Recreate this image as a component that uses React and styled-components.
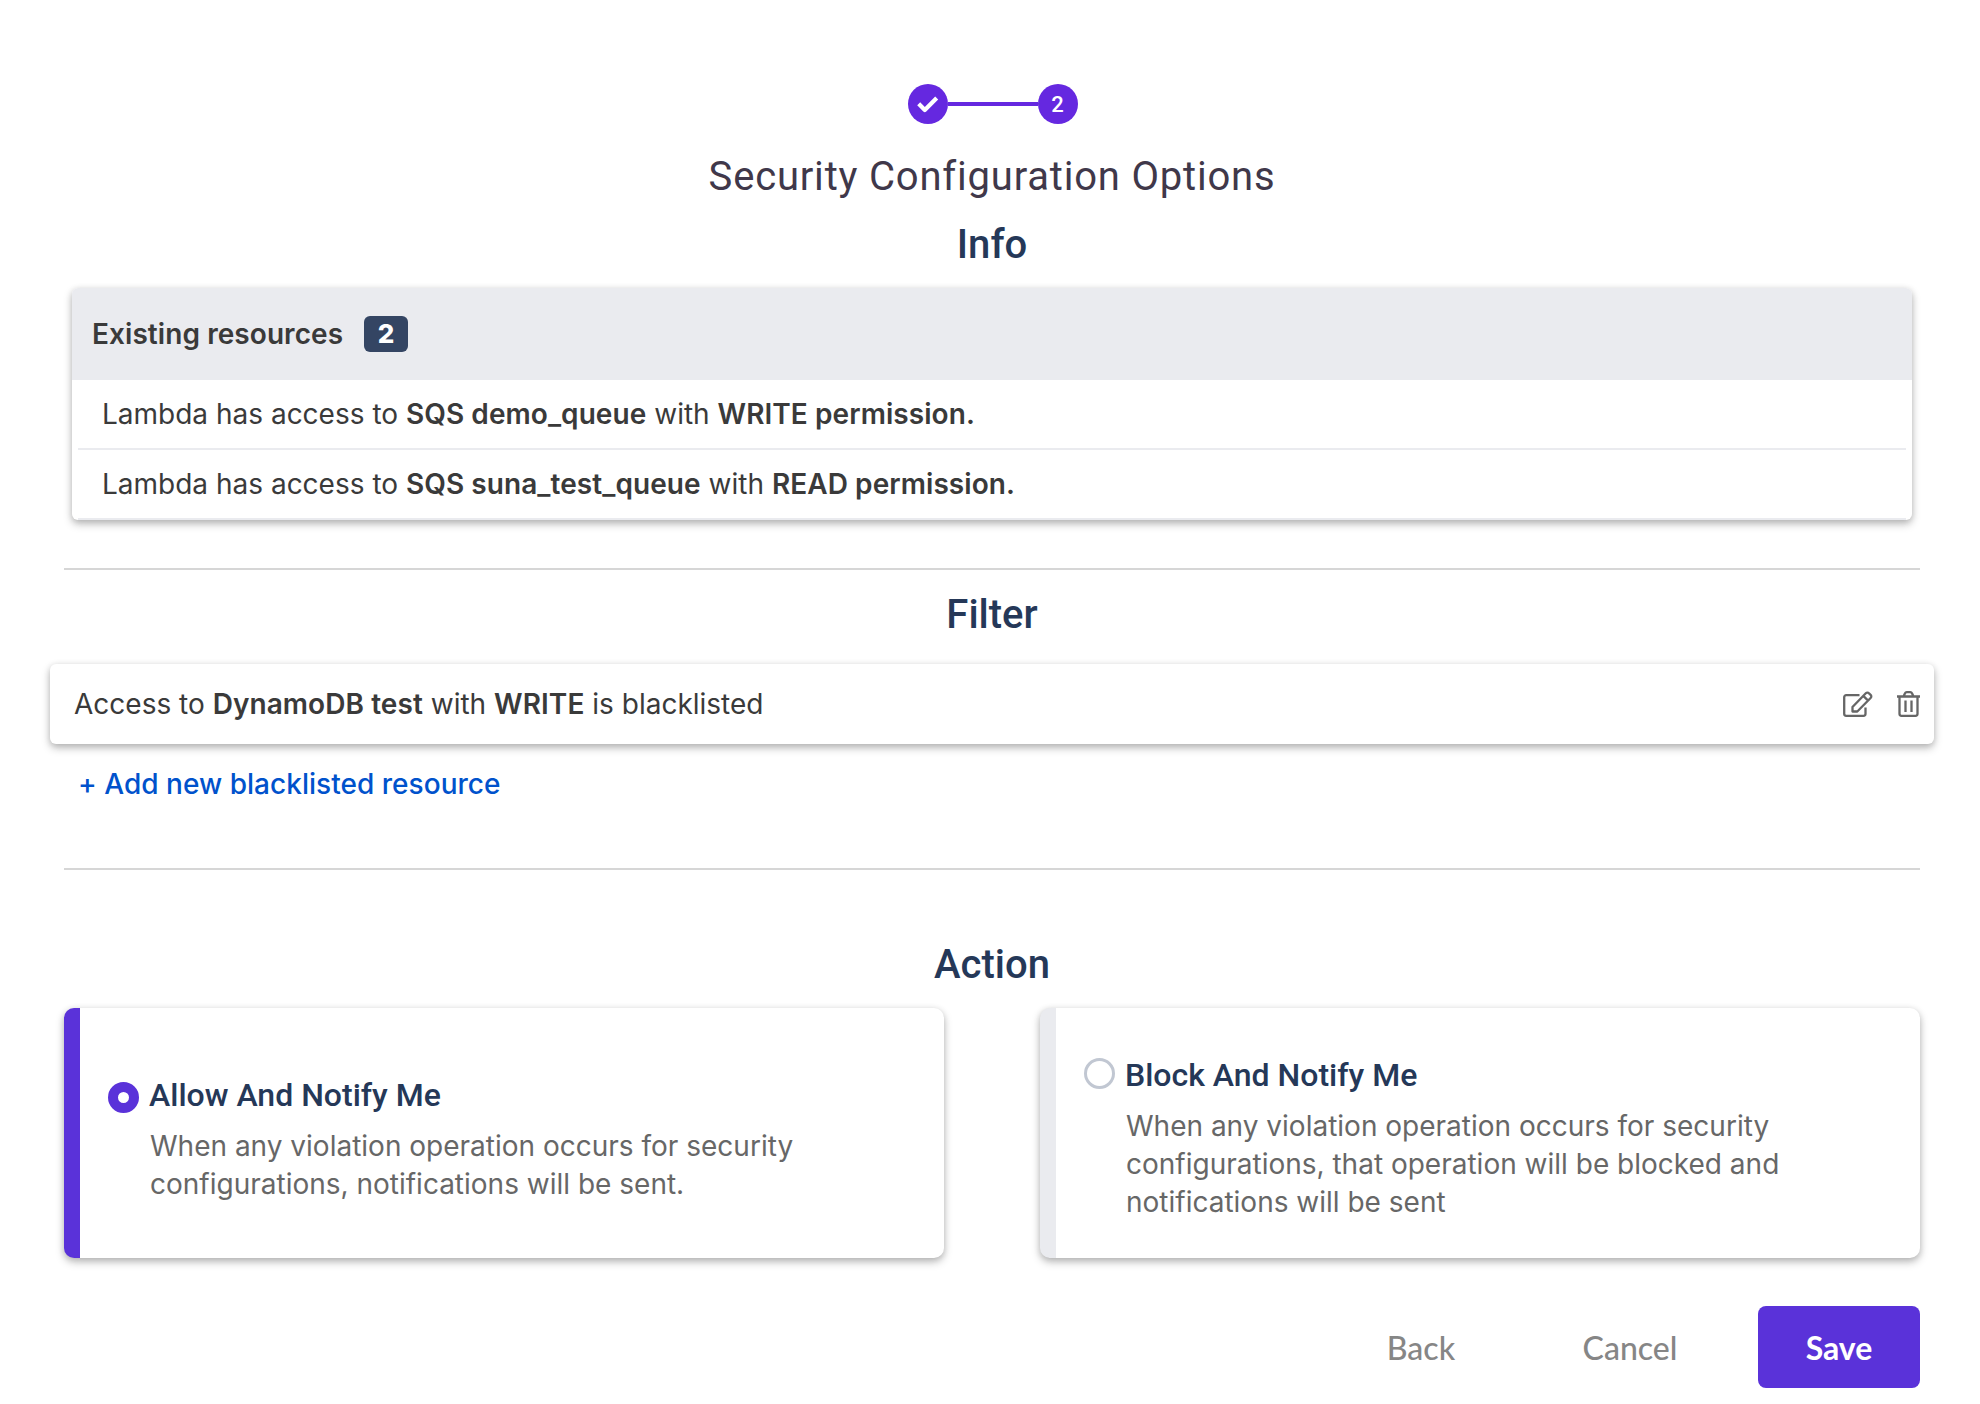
import React from 'react';
import styled, { createGlobalStyle } from 'styled-components';

const GlobalStyle = createGlobalStyle`
  *, *::before, *::after { box-sizing: border-box; }
  body { margin: 0; background: #fff; font-family: Inter, "Liberation Sans", sans-serif; }
`;

const shadow = '0 4px 8px rgba(0, 0, 0, 0.26), 0 1px 6px rgba(0, 0, 0, 0.1)';

const Page = styled.main`
  width: 1980px;
  height: 1404px;
  padding: 84px 60px 0 64px;
  display: flex;
  flex-direction: column;
  overflow: hidden;
  color: #3a3a3a;
  font-size: 28px;
`;

const Stepper = styled.div`
  display: flex;
  align-items: center;
  justify-content: center;
  padding-left: 2px;
`;

const Step = styled.div`
  width: 40px;
  height: 40px;
  padding: 1px 1px 0 0;
  border-radius: 50%;
  background: #6528e0;
  color: #fff;
  display: flex;
  align-items: center;
  justify-content: center;
  font: 500 22px/40px Roboto, sans-serif;
`;

const StepLine = styled.div`
  width: 90px;
  height: 4px;
  background: #6528e0;
`;

const Title = styled.h1`
  margin: 29px 0 0;
  text-align: center;
  font: 400 40px/48px Roboto, sans-serif;
  letter-spacing: 0.8px;
  color: #40384a;
`;

const Heading = styled.h2`
  margin: ${(p) => p.$top}px 0 0;
  text-align: center;
  font: 500 40px/48px Roboto, sans-serif;
  color: #253858;
`;

const Content = styled.div`
  width: 1856px;
`;

const ResourceCard = styled.section`
  margin: 19px 8px 0;
  height: 232px;
  border-radius: 6px;
  overflow: hidden;
  background: #fff;
  box-shadow: ${shadow};
`;

const ResourceHeader = styled.header`
  height: 92px;
  padding-left: 20px;
  display: flex;
  align-items: center;
  gap: 21px;
  background: #eaebef;
  font-weight: 600;
  letter-spacing: 0.07px;
`;

const Badge = styled.span`
  width: 44px;
  height: 36px;
  border-radius: 6px;
  background: #344563;
  color: #fff;
  text-align: center;
  font-size: 26px;
  font-weight: 800;
  line-height: 36px;
`;

const Strong = styled.b`
  font-weight: 600;
  letter-spacing: 0.07px;
`;

const ResourceRow = styled.div`
  height: 70px;
  margin: 0 6px;
  padding-left: 24px;
  line-height: 68px;
  border-bottom: 2px solid #eaebef;
`;

const Divider = styled.hr`
  height: 2px;
  margin: ${(p) => p.$top}px 0 0;
  border: 0;
  background: #d6d6d6;
`;

const FilterCard = styled.section`
  height: 80px;
  margin: 25px -14px 0;
  padding: 0 14px 0 24px;
  display: flex;
  align-items: center;
  border-radius: 6px;
  background: #fff;
  box-shadow: ${shadow};
`;

const FilterText = styled.p`
  flex: 1;
  margin: 0;
  line-height: 80px;
`;

const IconButton = styled.button`
  margin: 0 0 0 ${(p) => p.$gap || 0}px;
  padding: 0;
  border: 0;
  background: none;
  display: flex;
  color: #666;
`;

const AddLink = styled.a`
  display: block;
  width: max-content;
  margin: 20px 0 0 14px;
  line-height: 40px;
  font-weight: 500;
  letter-spacing: 0.03px;
  color: #0052cc;
`;

const Options = styled.div`
  display: grid;
  grid-template-columns: 1fr 1fr;
  gap: 96px;
  margin-top: 19px;
`;

const Option = styled.label`
  height: 250px;
  padding: ${(p) => (p.$selected ? '1px 0 0' : '0 0 1px')};
  display: flex;
  align-items: center;
  border-left: 16px solid ${(p) => (p.$selected ? '#5a32d9' : '#eaebef')};
  border-radius: 10px;
  background: #fff;
  box-shadow: ${shadow};
`;

const OptionBody = styled.div`
  display: grid;
  grid-template-columns: 31px 1fr;
  column-gap: 11px;
  width: 770px;
  padding-left: 28px;
`;

const Radio = styled.span`
  width: 31px;
  height: 31px;
  margin: ${(p) => (p.$selected ? 18 : 14)}px 0 0 -0.4px;
  border-radius: 50%;
  border: ${(p) => (p.$selected ? '10.5px solid #5a32d9' : '3px solid #c1c7d2')};
  background: #fff;
`;

const OptionTitle = styled.span`
  margin: 0 0 1px -1px;
  font: 500 32px/62px Roboto, sans-serif;
  color: #253858;
`;

const OptionText = styled.span`
  grid-column: 2;
  line-height: 38px;
  color: #676767;
`;

const Footer = styled.footer`
  margin-top: 48px;
  display: flex;
  justify-content: flex-end;
  gap: 47px;
`;

const Button = styled.button`
  height: 82px;
  width: 162px;
  padding: 2px 0 0;
  border: 0;
  border-radius: 8px;
  background: ${(p) => (p.$primary ? '#5a32d9' : 'transparent')};
  color: ${(p) => (p.$primary ? '#fff' : '#868686')};
  font: ${(p) => (p.$primary ? 700 : 500)} 32px/80px Lato, sans-serif;
`;

const CheckIcon = () => (
  <svg width="22" height="18" viewBox="0 0 22 18" fill="none" stroke="#fff" strokeWidth="4.200" strokeLinejoin="round">
    <path d="M1.700 7.800 7.800 14 19.700 2" />
  </svg>
);

const EditIcon = () => (
  <svg width="30" height="26" viewBox="0 0 30 26" fill="none" stroke="currentColor" strokeWidth="2.300" strokeLinejoin="round">
    <path d="M16.500 4.200H3.200a2 2 0 0 0-2 2v16.600a2 2 0 0 0 2 2h17.300a2 2 0 0 0 2-2v-6.300" />
    <path d="M9.500 20.500v-4.500L22.800 2.300a2.200 2.200 0 0 1 3.200 0l1.600 1.500a2.200 2.200 0 0 1 0 3.200L14.300 20.500zM20.300 4.900l4.800 4.700" />
  </svg>
);

const TrashIcon = () => (
  <svg width="23" height="26" viewBox="0 0 23 26" fill="none" stroke="currentColor" strokeWidth="2.300">
    <path d="M0 5.500h23M6.500 5.500 8 2.300C8.300 1.600 8.900 1.200 9.700 1.200h3.600c.8 0 1.400.4 1.700 1.100l1.500 3.200M2.500 5.500V22.800a2 2 0 0 0 2 2h14a2 2 0 0 0 2-2V5.500M8.500 9.500v11.500M14.500 9.500v11.500" />
  </svg>
);

const resources = [
  { name: 'SQS demo_queue', access: 'WRITE permission.' },
  { name: 'SQS suna_test_queue', access: 'READ permission.' },
];

const options = [
  {
    title: 'Allow And Notify Me',
    text: ['When any violation operation occurs for security', 'configurations, notifications will be sent.'],
    selected: true,
  },
  {
    title: 'Block And Notify Me',
    text: [
      'When any violation operation occurs for security',
      'configurations, that operation will be blocked and',
      'notifications will be sent',
    ],
    selected: false,
  },
];

export default function App() {
  return (
    <>
      <GlobalStyle />
      <Page>
        <Content>
          <Stepper>
            <Step><CheckIcon /></Step>
            <StepLine />
            <Step>2</Step>
          </Stepper>
          <Title>Security Configuration Options</Title>

          <Heading $top={20}>Info</Heading>
          <ResourceCard>
            <ResourceHeader>
              Existing resources
              <Badge>{resources.length}</Badge>
            </ResourceHeader>
            {resources.map((r) => (
              <ResourceRow key={r.name}>
                Lambda has access to <Strong>{r.name}</Strong> with <Strong>{r.access}</Strong>
              </ResourceRow>
            ))}
          </ResourceCard>
          <Divider $top={48} />

          <Heading $top={21}>Filter</Heading>
          <FilterCard>
            <FilterText>
              Access to <Strong>DynamoDB test</Strong> with <Strong>WRITE</Strong> is blacklisted
            </FilterText>
            <IconButton aria-label="Edit"><EditIcon /></IconButton>
            <IconButton aria-label="Delete" $gap={24}><TrashIcon /></IconButton>
          </FilterCard>
          <AddLink>+ Add new blacklisted resource</AddLink>
          <Divider $top={64} />

          <Heading $top={71}>Action</Heading>
          <Options>
            {options.map((o) => (
              <Option key={o.title} $selected={o.selected}>
                <OptionBody>
                  <Radio $selected={o.selected} />
                  <OptionTitle>{o.title}</OptionTitle>
                  <OptionText>
                    {o.text.map((line) => (
                      <React.Fragment key={line}>{line}<br /></React.Fragment>
                    ))}
                  </OptionText>
                </OptionBody>
              </Option>
            ))}
          </Options>

          <Footer>
            <Button>Back</Button>
            <Button>Cancel</Button>
            <Button $primary>Save</Button>
          </Footer>
        </Content>
      </Page>
    </>
  );
}
